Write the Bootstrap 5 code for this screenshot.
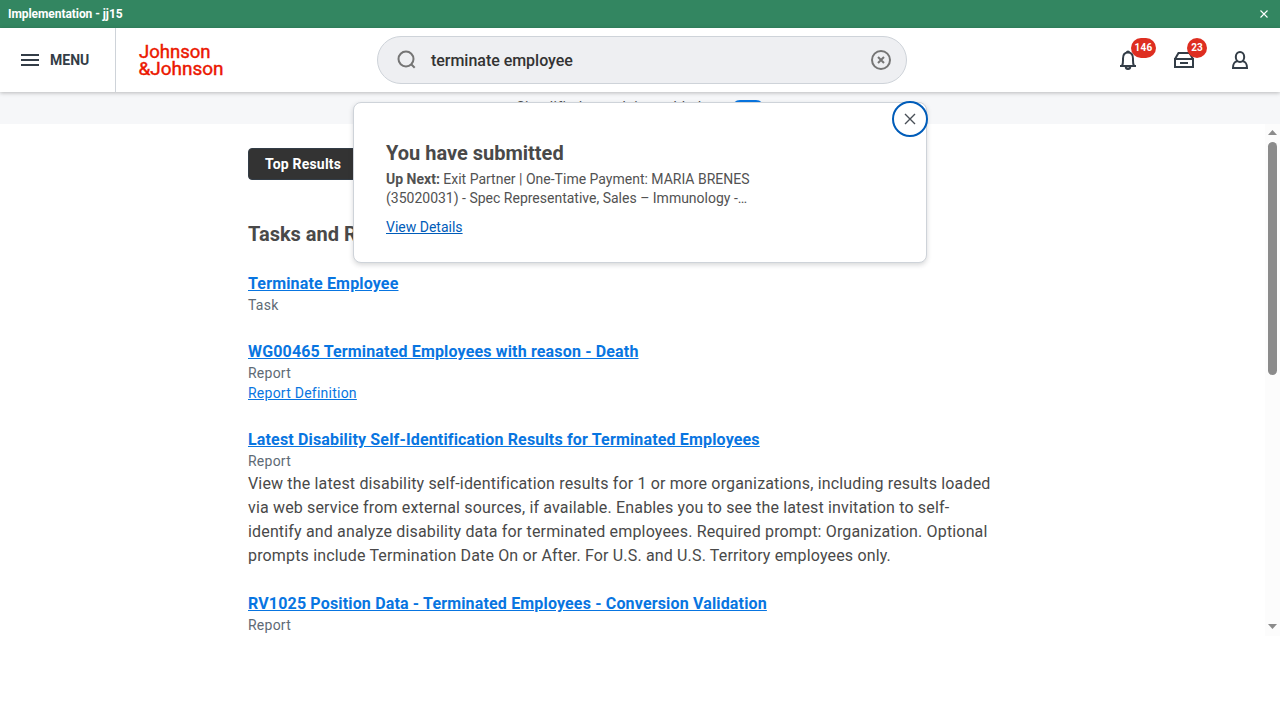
<!DOCTYPE html>
<html lang="en">
<head>
<meta charset="utf-8">
<title>Search results</title>
<meta name="viewport" content="width=device-width, initial-scale=1">
<link href="https://cdn.jsdelivr.net/npm/bootstrap@5.3.0/dist/css/bootstrap.min.css" rel="stylesheet">
<style>
body{font-family:Roboto,sans-serif;color:#494949;height:720px;overflow:hidden;background:#fff}
svg{display:block}
.env-bar{height:28px;background:#338661;color:#fff;font-size:12px;font-weight:700;letter-spacing:-.06px}
.top-bar{height:64px;box-shadow:0 1px 4px rgba(0,0,0,.25);z-index:2}
.menu-btn{width:116px;height:64px;border-right:1px solid #ced3d9;font-size:14px;font-weight:700;color:#333d47;padding:0 0 0 21px;gap:11px}
.brand-mark{margin-left:22px}
.search-slot{left:377px;top:8px;width:530px;height:48px}
.search-pill{background:#eeeff2;border:1px solid #ced3d9;font-weight:500;font-size:16px;color:#333;height:48px;padding:0 15px 0 19px}
.q-text{margin-left:14px;padding-top:2px;letter-spacing:-.03px}
.icon-row{gap:32px;margin-right:28px;color:#333d47}
.icon-row>div{width:24px;height:24px}
.count{background:#de2e21;font-size:10px;font-weight:700;height:20px;line-height:19px;border-radius:10px;text-align:center;color:#fff;top:-10px;letter-spacing:.3px}
.toggle-strip{height:32px;background:#f6f7f9;font-size:14px;letter-spacing:.38px}
.strip-text{padding-bottom:1px;margin-right:30px}
.switch{width:32px;height:16px;border-radius:8px;background:#0875e1}
.results{height:512px;overflow:hidden;background:#fff}
.results-col{padding:24px 0 0 248px;width:1000px}
.pill-tab{height:32px;width:150px;background:#333;border:1px solid #333d47;border-radius:4px;color:#fff;font-weight:700;font-size:14px;line-height:30px;padding-left:16px;letter-spacing:.2px}
.sect{font-size:20px;font-weight:700;line-height:28px;margin:40px 0 23px}
.hit{margin-bottom:24px}
.hit h3{font-size:16px;line-height:24px;height:24px;padding-top:1px;font-weight:700;letter-spacing:.16px;margin:0}
.hit a{color:#0875e1}
.kind,.subl{font-size:14px;line-height:20px;letter-spacing:.24px;color:#5e6a75}
.desc{font-size:16px;line-height:24px;letter-spacing:.16px;width:750px;margin:1px 0 -1px}
.scroll-rail{width:15px;background:#fcfcfc;padding:6px 0 7px}
.thumb{width:9px;height:233px;border-radius:5px;background:#8b8b8b;margin-top:3px}
.toast-box{left:353px;top:102px;width:574px;height:161px;background:#fff;border:1px solid #ced3d9;border-radius:8px;box-shadow:0 2px 5px rgba(31,38,46,.18);padding:36px 32px;z-index:5}
.toast-box h2{font-size:20px;line-height:28px;font-weight:700;margin:0 0 3px}
.toast-box p{font-size:14px;line-height:19px;margin:0 0 10px;width:385px;color:#525252}
.toast-box a{font-size:14px;line-height:19px;color:#005cb9;display:block}
.close-ring{width:36px;height:36px;border:2px solid #005cb9;border-radius:50%;background:#fff;right:-2px;top:-2px}
</style>
</head>
<body>
<div class="env-bar d-flex align-items-center justify-content-between px-2">
  <span>Implementation - jj15</span>
  <svg class="me-1" width="8" height="8" viewBox="0 0 8 8" stroke="#fff" stroke-width="1.1"><path d="M.5.5l7 7M7.5.5l-7 7"/></svg>
</div>
<header class="top-bar d-flex align-items-center bg-white position-relative">
  <div class="menu-btn d-flex align-items-center">
    <svg width="18" height="12" viewBox="0 0 18 12" fill="#333d47"><path d="M0 0h18v2H0zM0 5h18v2H0zM0 10h18v2H0z"/></svg>
    <span>MENU</span>
  </div>
  <svg class="brand-mark" width="88" height="40" viewBox="0 0 88 40" fill="#eb1700" stroke="#eb1700" stroke-width=".45" font-family="Roboto" font-size="19">
    <text x="1" y="18" textLength="71.500" lengthAdjust="spacingAndGlyphs">Johnson</text>
    <text x="0.500" y="35" textLength="85" lengthAdjust="spacingAndGlyphs">&amp;Johnson</text>
  </svg>
  <div class="search-slot position-absolute">
    <div class="search-pill rounded-pill d-flex align-items-center">
      <svg width="20" height="20" viewBox="0 0 20 20" fill="none" stroke="#757575" stroke-width="2"><circle cx="9" cy="9" r="7.500"/><path d="M14.200 14.200l3.500 3.500"/></svg>
      <span class="flex-grow-1 q-text">terminate employee</span>
      <svg width="20" height="20" viewBox="0 0 20 20" fill="none" stroke="#757575" stroke-width="2"><circle cx="10" cy="10" r="9"/><path d="M7 7l6 6M13 7l-6 6"/></svg>
    </div>
  </div>
  <div class="icon-row d-flex ms-auto">
    <div class="position-relative">
      <svg width="24" height="24" viewBox="0 0 24 24" fill="none" stroke="#333d47" stroke-width="2"><path d="M4 18h16M6 18c1.300-2.500 1-4.500 1-7.500C7 6.500 9 4.500 12 4.500s5 2 5 6c0 3-.3 5 1 7.500"/><path d="M10 4a2 1.500 0 0 1 4 0zM9.500 19.500h5a2.500 2 0 0 1-5 0z" fill="#333d47" stroke="none"/><path d="M9.800 19a2.200 2 0 0 0 4.400 0"/></svg>
      <span class="count position-absolute" style="left:15px;width:25px">146</span>
    </div>
    <div class="position-relative">
      <svg width="24" height="24" viewBox="0 0 24 24" fill="none" stroke="#333d47" stroke-width="2"><path d="M3 11h18v8H3zM3 11l3.500-6h11l3.500 6M8 15h8"/></svg>
      <span class="count position-absolute" style="left:15px;width:20px;letter-spacing:0">23</span>
    </div>
    <div>
      <svg width="24" height="24" viewBox="0 0 24 24" fill="none" stroke="#333d47" stroke-width="2"><ellipse cx="12" cy="9" rx="4.200" ry="5"/><path d="M9.500 13C6 14 5 15.500 5 20h14c0-4.500-1-6-4.500-7"/></svg>
    </div>
  </div>
</header>
<div class="toggle-strip d-flex align-items-center justify-content-center">
  <span class="strip-text">Simplified search is enabled</span><span class="switch"></span>
</div>
<main class="results d-flex justify-content-between">
  <div class="results-col">
    <div class="pill-tab">Top Results</div>
    <h2 class="sect">Tasks and Reports</h2>
    <div class="hit"><h3><a href="#">Terminate Employee</a></h3><div class="kind">Task</div></div>
    <div class="hit"><h3><a href="#">WG00465 Terminated Employees with reason - Death</a></h3><div class="kind">Report</div><div class="subl"><a href="#">Report Definition</a></div></div>
    <div class="hit"><h3><a href="#">Latest Disability Self-Identification Results for Terminated Employees</a></h3><div class="kind">Report</div>
      <p class="desc">View the latest disability self-identification results for 1 or more organizations, including results loaded via web service from external sources, if available. Enables you to see the latest invitation to self-identify and analyze disability data for terminated employees. Required prompt: Organization. Optional prompts include Termination Date On or After. For U.S. and U.S. Territory employees only.</p></div>
    <div class="hit"><h3><a href="#">RV1025 Position Data - Terminated Employees - Conversion Validation</a></h3><div class="kind">Report</div></div>
  </div>
  <div class="scroll-rail d-flex flex-column align-items-center">
    <svg width="9" height="9" viewBox="0 0 9 9" fill="#8b8b8b"><path d="M0 5L4.500 0 9 5z"/></svg>
    <div class="thumb"></div>
    <svg class="mt-auto" width="9" height="5" viewBox="0 0 9 5" fill="#8b8b8b"><path d="M0 0h9L4.500 5z"/></svg>
  </div>
</main>
<section class="toast-box position-absolute">
  <span class="close-ring position-absolute d-flex align-items-center justify-content-center">
    <svg width="12" height="12" viewBox="0 0 12 12" stroke="#494f57" stroke-width="1.400"><path d="M1 1l10 10M11 1L1 11"/></svg>
  </span>
  <h2>You have submitted</h2>
  <p><b class="fw-bold">Up Next:</b> Exit Partner | One-Time Payment: MARIA BRENES (35020031) - Spec Representative, Sales – Immunology -…</p>
  <a href="#">View Details</a>
</section>
<script src="https://cdn.jsdelivr.net/npm/bootstrap@5.3.0/dist/js/bootstrap.bundle.min.js"></script>
</body>
</html>
